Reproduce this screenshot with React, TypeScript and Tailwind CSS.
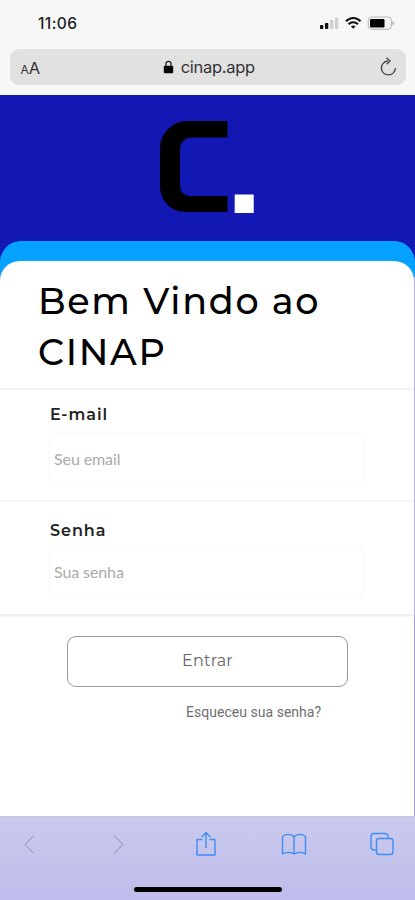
import type { ReactNode } from "react";

const montserrat = "font-['Montserrat','Lato',sans-serif]";

function StatusBar() {
  return (
    <div className="flex h-[49px] items-start justify-between pl-[38px] pr-[20px] pt-[15px]">
      <span className="font-['Inter',sans-serif] text-[15.5px] font-medium leading-[17px] tracking-[0.4px] text-[#222]">11:06</span>
      <svg width="76" height="16" viewBox="319 15 76 16" fill="none">
        <rect x="320" y="25" width="3.3" height="4" rx="0.8" fill="#111" />
        <rect x="325" y="23" width="3.3" height="6" rx="0.8" fill="#111" />
        <rect x="330" y="20" width="3.3" height="9" rx="0.8" fill="#d0d0d0" />
        <rect x="335" y="17.5" width="3.3" height="11.5" rx="0.8" fill="#d0d0d0" />
        <path d="M346 21.2C350.3 16.9 356.3 16.9 360.5 21.2" stroke="#111" strokeWidth="2.2" />
        <path d="M348.5 24.2C351.2 21.5 355.3 21.5 358 24.2" stroke="#111" strokeWidth="2" />
        <path d="M350.9 26.3C352.2 25.2 354.3 25.2 355.6 26.3L353.25 28.8Z" fill="#111" />
        <rect x="368.3" y="17" width="23" height="12.3" rx="3.2" stroke="#b5b5b5" />
        <rect x="370" y="19" width="14.5" height="8.5" rx="1.2" fill="#050505" />
        <path d="M392.5 21C394.6 22 394.6 24.6 392.5 25.5Z" fill="#aaa" />
      </svg>
    </div>
  );
}

function AddressBar() {
  return (
    <div className="ml-[10px] flex h-[36px] w-[396px] items-center justify-between rounded-[9px] bg-[#e1e1e2] pl-[10.5px] pr-[8px] text-[#333]">
      <span className="flex w-[24px] items-baseline pt-[2px] font-['Inter',sans-serif] leading-none">
        <span className="text-[12px]">A</span>
        <span className="text-[16.5px]">A</span>
      </span>
      <span className="flex items-center gap-[7px] pr-[6px]">
        <svg width="11" height="14" viewBox="0 0 11 14">
          <path d="M3 6V3.800C3 .6 8 .6 8 3.800V6" fill="none" stroke="#222" strokeWidth="1.3" />
          <rect x="0.8" y="5.8" width="9.4" height="7.5" rx="1" fill="#080808" />
        </svg>
        <span className="font-['Inter',sans-serif] text-[16.5px] leading-[20px] tracking-[-0.3px]">cinap.app</span>
      </span>
      <svg width="19" height="20" viewBox="0 0 19 20" fill="none" stroke="#444" strokeWidth="1.3">
        <path d="M8.800 4A7 7 0 1 0 16.400 11" />
        <path d="M7.500 .8L11 4L7.800 7.200" />
      </svg>
    </div>
  );
}

function Field({ label, placeholder, className, gap }: { label: string; placeholder: string; className: string; gap: string }) {
  return (
    <div className={`pl-[49px] ${className}`}>
      <label className={`block h-[20px] pl-[1px] text-[16px] font-semibold leading-[20px] tracking-[0.95px] text-[#222] ${montserrat}`}>{label}</label>
      <input
        placeholder={placeholder}
        className={`block h-[52px] w-[315px] rounded-[5px] border border-[#f8f8f8] bg-white px-[4px] pb-[2px] font-['Lato',sans-serif] text-[16px] tracking-[-0.1px] outline-none placeholder:text-[#aaa] ${gap}`}
      />
    </div>
  );
}

function ToolIcon({ children, className }: { children: ReactNode; className: string }) {
  return (
    <svg width="26" height="28" viewBox="0 0 26 28" fill="none" strokeWidth="1.4" strokeLinejoin="round" className={className}>
      {children}
    </svg>
  );
}

export default function App() {
  return (
    <div className="flex h-[900px] w-[415px] flex-col overflow-hidden bg-white">
      <header className="h-[95px] shrink-0 bg-[#f7f7f7]">
        <StatusBar />
        <AddressBar />
      </header>

      <div className="h-[721px] shrink-0 bg-[#1318b5]">
        <div className="h-[146px] pl-[160px] pt-[26px]">
          <svg width="96" height="98" viewBox="160 116 96 98">
            <path d="M227.500 116V132.500H192Q180 133.500 180 145V179Q180 190.500 190 191H227.500V207H188Q172 207 165 197Q160 190 160 181V143Q160 133 167 125Q175 116 188 116Z" fill="#000" />
            <rect x="234.700" y="189.500" width="19" height="18.500" fill="#fff" />
          </svg>
        </div>
        <div className="h-[575px] bg-linear-to-b from-[#1318b5] from-[34px] to-[#a197d6] to-[34px]">
          <div className="h-full rounded-t-[21px] bg-linear-to-b from-[#05a1ff] from-[36px] to-[#a197d6] to-[36px] pt-[20px]">
            <main className="flex h-[555px] w-[414px] flex-col rounded-t-[20px] bg-white">
              <section className="h-[353px] shrink-0 rounded-t-[20px] shadow-[0_2px_3px_#e9e9ee]">
                <h1 className={`h-[127px] pl-[38px] pt-[15px] text-[36.5px] font-medium leading-[50.5px] tracking-[1.7px] text-black ${montserrat}`}>
                  Bem Vindo ao<br />CINAP
                </h1>
                <div className="h-[2px] bg-[#f4f4f4]" />
                <Field label="E-mail" placeholder="Seu email" className="h-[110px] pt-[15px]" gap="mt-[8px]" />
                <div className="h-[2px] bg-[#f6f6f6]" />
                <Field label="Senha" placeholder="Sua senha" className="h-[112px] pt-[19px]" gap="mt-[5px]" />
              </section>
              <button className={`ml-[67px] mt-[22px] h-[51px] w-[281px] shrink-0 rounded-[9px] border border-[#999] pb-[1px] text-[16px] tracking-[0.2px] text-[#666] ${montserrat}`}>
                Entrar
              </button>
              <a className="ml-[186px] mt-[16px] w-fit whitespace-nowrap font-['Roboto',sans-serif] text-[14px] leading-[18px] tracking-[0.03px] text-[#707070]">
                Esqueceu sua senha?
              </a>
            </main>
          </div>
        </div>
      </div>

      <footer className="flex h-[84px] shrink-0 flex-col items-center border-t border-[#c4c4d8] bg-linear-to-b from-[#cac9ec] to-[#bebdec]">
        <nav className="flex h-[70px] w-full shrink-0 justify-between pl-[17px] pr-[20px] pt-[13px]">
          <ToolIcon className="text-[#aaa7c3]"><path d="M17 5.500L8 14.500L17 23.500" stroke="currentColor" /></ToolIcon>
          <ToolIcon className="text-[#aaa7c3]"><path d="M9 5.500L18 14.500L9 23.500" stroke="currentColor" /></ToolIcon>
          <ToolIcon className="text-[#3f8df5]">
            <path d="M9.500 9.500H4V25H22V9.500H16.500M13 18V2.500M8.500 7L13 2.500L17.500 7" stroke="currentColor" />
          </ToolIcon>
          <ToolIcon className="text-[#3f8df5]">
            <path d="M13 7C10.500 3.500 3.500 3.500 1.500 7V24C4.500 21.800 10 21.800 13 24C16 21.800 21.500 21.800 24.500 24V7C22.500 3.500 15.500 3.500 13 7V24" stroke="currentColor" />
          </ToolIcon>
          <ToolIcon className="text-[#3f8df5]">
            <rect x="7.500" y="8.500" width="16.500" height="16" rx="2.500" stroke="currentColor" />
            <path d="M7 20H5Q2 20 2 17V6.500Q2 3.500 5 3.500H16Q19 3.500 19 6.500V8" stroke="currentColor" />
          </ToolIcon>
        </nav>
        <div className="h-[5px] w-[148px] shrink-0 rounded-full bg-black" />
      </footer>
    </div>
  );
}
